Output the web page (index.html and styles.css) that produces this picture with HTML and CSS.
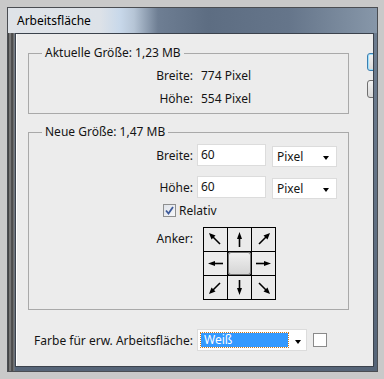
FILE: index.html
```html
<!DOCTYPE html>
<html lang="de">
<head>
    <meta charset="UTF-8">
    <meta name="viewport" content="width=device-width, initial-scale=1.0">
    <title>Arbeitsfläche</title>
    <link rel="stylesheet" href="styles.css">
</head>
<body>
    <div class="window">
        <div class="titlebar">Arbeitsfläche</div>
        <div class="client">
            <div class="main">
                <fieldset class="group group-current">
                    <legend>Aktuelle Größe: 1,23 MB</legend>
                    <div class="row">
                        <span class="label">Breite:</span>
                        <span class="value">774 Pixel</span>
                    </div>
                    <div class="row">
                        <span class="label">Höhe:</span>
                        <span class="value">554 Pixel</span>
                    </div>
                </fieldset>

                <fieldset class="group group-new">
                    <legend>Neue Größe: 1,47 MB</legend>
                    <div class="row row-input">
                        <span class="label">Breite:</span>
                        <div class="field">60</div>
                        <div class="dropdown"><span>Pixel</span><i class="caret"></i></div>
                    </div>
                    <div class="row row-input">
                        <span class="label">Höhe:</span>
                        <div class="field">60</div>
                        <div class="dropdown"><span>Pixel</span><i class="caret"></i></div>
                    </div>
                    <div class="check-row">
                        <span class="checkbox">
                            <svg width="11" height="11" viewBox="0 0 11 11"><path d="M2 5.5 L4.5 8.5 L9 2" fill="none" stroke="#3d5a9a" stroke-width="1.8"/></svg>
                        </span>
                        <span>Relativ</span>
                    </div>
                    <div class="anchor-row">
                        <span class="label">Anker:</span>
                        <div class="anchor">
                            <div class="cell"><svg viewBox="0 0 23 23"><path d="M16 16 L8 8" class="shaft"/><path d="M5 5 L11.5 7.5 L7.5 11.5 Z"/></svg></div>
                            <div class="cell"><svg viewBox="0 0 23 23"><path d="M11.5 19 L11.5 9" class="shaft"/><path d="M11.5 4 L14 11 L9 11 Z"/></svg></div>
                            <div class="cell"><svg viewBox="0 0 23 23"><path d="M7 16 L15 8" class="shaft"/><path d="M18 5 L15.5 11.5 L11.5 7.5 Z"/></svg></div>
                            <div class="cell"><svg viewBox="0 0 23 23"><path d="M19 11.5 L9 11.5" class="shaft"/><path d="M4 11.5 L11 9 L11 14 Z"/></svg></div>
                            <div class="cell cell-center"></div>
                            <div class="cell"><svg viewBox="0 0 23 23"><path d="M4 11.5 L14 11.5" class="shaft"/><path d="M19 11.5 L12 9 L12 14 Z"/></svg></div>
                            <div class="cell"><svg viewBox="0 0 23 23"><path d="M16 7 L8 15" class="shaft"/><path d="M5 18 L7.5 11.5 L11.5 15.5 Z"/></svg></div>
                            <div class="cell"><svg viewBox="0 0 23 23"><path d="M11.5 4 L11.5 14" class="shaft"/><path d="M11.5 19 L14 12 L9 12 Z"/></svg></div>
                            <div class="cell"><svg viewBox="0 0 23 23"><path d="M7 7 L15 15" class="shaft"/><path d="M18 18 L11.5 15.5 L15.5 11.5 Z"/></svg></div>
                        </div>
                    </div>
                </fieldset>

                <div class="fill-row">
                    <span class="label">Farbe für erw. Arbeitsfläche:</span>
                    <div class="dropdown dropdown-wide">
                        <span class="selected">Weiß</span><i class="caret"></i>
                    </div>
                    <div class="swatch"></div>
                </div>
            </div>

            <div class="buttons">
                <div class="btn btn-default"></div>
                <div class="btn"></div>
            </div>
        </div>
    </div>
</body>
</html>
```

FILE: styles.css
```css
body {
    margin: 0;
    background-color: #c9c9c9;
    font-family: "Segoe UI", "Noto Sans", "Liberation Sans", sans-serif;
    font-size: 12px;
    color: #141414;
}

.window {
    margin: 7px 6px 0 7px;
    width: 369px;
    height: 363px;
    border: 1px solid #4a4d52;
    background:
        linear-gradient(90deg, #2e2e2e 0, #8c8c8c 2px, #3c3c3c 4px, #7e7e7e 6px, transparent 7px),
        linear-gradient(#6f7f92, #556477);
    display: flex;
    flex-direction: column;
}

.titlebar {
    height: 25px;
    line-height: 25px;
    padding-left: 9px;
    color: #000;
    background: linear-gradient(90deg, #dfe3e8 0, #dde2e8 92px, #c8d8ea 112px, #b6c5d6 126px, #6e7e93 150px, #5d6d82 200px, #65758a 280px, #8797a9 369px);
}

.client {
    margin: 0 3px 4px 7px;
    height: 332px;
    border: 1px solid #3b424c;
    background-color: #ececec;
    box-shadow: inset 1px 0 0 #ffffff;
    display: flex;
    overflow: hidden;
}

.main {
    padding-left: 12px;
    width: 321px;
    flex-shrink: 0;
}

.group {
    margin: 11px 0 0 0;
    padding: 3px 0 3px 13px;
    border: 1px solid #a9a9a9;
    min-width: 0;
}

.group legend {
    padding: 0 3px;
    line-height: 16px;
}

.group-new {
    margin-top: 10px;
    padding: 4px 0 9px 13px;
}

.row {
    display: flex;
    align-items: center;
    height: 23px;
}

.label {
    width: 151px;
    text-align: right;
    flex-shrink: 0;
}

.value {
    margin-left: 8px;
}

.row-input {
    height: 22px;
    margin-bottom: 10px;
}

.field {
    margin-left: 4px;
    width: 64px;
    height: 20px;
    line-height: 20px;
    padding-left: 3px;
    background-color: #ffffff;
    border: 1px solid #dcdcdc;
}

.dropdown {
    margin-left: 6px;
    width: 65px;
    height: 21px;
    margin-top: 2px;
    background-color: #ffffff;
    border: 1px solid #dcdcdc;
    display: flex;
    align-items: center;
    padding-left: 4px;
    box-sizing: border-box;
    position: relative;
}

.caret {
    position: absolute;
    right: 7px;
    top: 9px;
    width: 0;
    height: 0;
    border-left: 3.5px solid transparent;
    border-right: 3.5px solid transparent;
    border-top: 4px solid #000;
}

.check-row {
    display: flex;
    align-items: center;
    height: 16px;
    margin-top: -6px;
    padding-left: 121px;
}

.checkbox {
    width: 11px;
    height: 11px;
    border: 1px solid #8e8f8f;
    background: linear-gradient(135deg, #dfe3ea, #f6f7f9);
    margin-right: 3px;
    display: flex;
}

.anchor-row {
    display: flex;
    margin-top: 9px;
}

.anchor-row .label {
    padding-top: 4px;
    line-height: 16px;
}

.anchor {
    margin-left: 10px;
    display: grid;
    grid-template-columns: repeat(3, 23px);
    grid-template-rows: repeat(3, 23px);
    gap: 1px;
    border: 1px solid #000;
    background-color: #000;
}

.cell {
    background-color: #ebebeb;
}

.cell svg {
    display: block;
    width: 23px;
    height: 23px;
}

.cell svg path {
    fill: #000;
}

.cell svg .shaft {
    fill: none;
    stroke: #000;
    stroke-width: 1.6;
}

.cell-center {
    background: linear-gradient(#f1f1f1, #d4d4d4);
    border-radius: 3px;
    box-shadow: inset 0 0 0 1px #777777;
}

.fill-row {
    display: flex;
    align-items: center;
    margin-top: 19px;
    height: 22px;
}

.fill-row .label {
    width: 165px;
}

.dropdown-wide {
    margin: 0 0 0 4px;
    width: 110px;
    height: 22px;
    padding-left: 3px;
}

.selected {
    width: 84px;
    height: 14px;
    line-height: 14px;
    padding-left: 3px;
    color: #ffffff;
    background-color: #3399ff;
    outline: 1px dotted #c8781e;
}

.dropdown-wide .caret {
    top: 10px;
    right: 5px;
}

.swatch {
    margin-left: 6px;
    width: 12px;
    height: 12px;
    border: 1px solid #8a8a8a;
    background-color: #ffffff;
}

.buttons {
    margin-left: 18px;
    padding-top: 19px;
    display: flex;
    flex-direction: column;
    gap: 9px;
    flex-shrink: 0;
}

.btn {
    width: 75px;
    height: 16px;
    border: 1px solid #707070;
    border-radius: 3px;
    background: linear-gradient(#f2f2f2, #dadada);
}

.btn-default {
    border-color: #3c7fb1;
    box-shadow: inset 0 0 0 1px #9fe0fb;
}
```
